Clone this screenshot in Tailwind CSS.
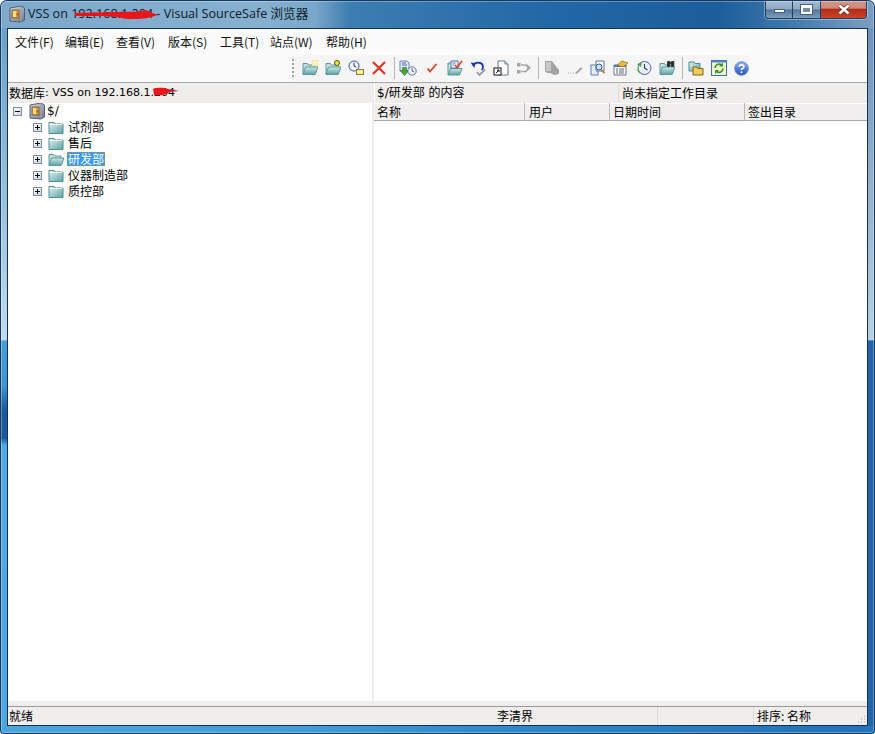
<!DOCTYPE html>
<html lang="zh-CN">
<head>
    <meta charset="UTF-8">
    <title>VSS on 192.168.1.204 - Visual SourceSafe 浏览器</title>
    <script src="https://cdn.jsdelivr.net/npm/@tailwindcss/browser@4"></script>
</head>
<body class="bg-white overflow-hidden">
    <svg width="0" height="0" class="block h-0 w-0">
        <defs>
            <linearGradient id="teal" x1="0" y1="0" x2="1" y2="1">
                <stop offset="0" stop-color="#e2f3f1"/>
                <stop offset="1" stop-color="#5fa5a5"/>
            </linearGradient>
            <linearGradient id="tealOpen" x1="0" y1="0" x2="0" y2="1">
                <stop offset="0" stop-color="#cfe9e6"/>
                <stop offset="1" stop-color="#5d9fa3"/>
            </linearGradient>
            <linearGradient id="safe" x1="0" y1="0" x2="1" y2="1">
                <stop offset="0" stop-color="#e0e0ea"/>
                <stop offset="1" stop-color="#6f7488"/>
            </linearGradient>
            <linearGradient id="ball" x1="0" y1="0" x2="0" y2="1">
                <stop offset="0" stop-color="#8fb4ef"/>
                <stop offset="1" stop-color="#1f4fc0"/>
            </linearGradient>
            <symbol id="folder" viewBox="0 0 16 16">
                <path d="M1 3.500h5l1 1.500h8v9.500H1z" fill="url(#teal)" stroke="#4d8d8f"/>
                <path d="M1.500 5.500h13" stroke="#f2fbfa"/>
            </symbol>
            <symbol id="folderOpen" viewBox="0 0 16 16">
                <path d="M1 14V3.500h4.500l1 1.500H13V7" fill="#bfe0dd" stroke="#5c9a9c"/>
                <path d="M1 14.500l2.500-7.500H16l-2.800 7.500z" fill="url(#tealOpen)" stroke="#5c9a9c"/>
            </symbol>
            <symbol id="safeIcon" viewBox="0 0 18 18">
                <path d="M2 3l11-2 3.500 2v12l-3.500 2-11-1z" fill="url(#safe)" stroke="#565b70"/>
                <path d="M13 1.500v15" stroke="#9a9fb2"/>
                <rect x="4" y="5" width="7" height="8" fill="#d99f2b" stroke="#77683f"/>
                <rect x="5" y="6" width="3" height="6" fill="#f7dc83"/>
                <circle cx="9.500" cy="9.500" r="1" fill="#c8343a"/>
            </symbol>
            <symbol id="clockSmall" viewBox="0 0 12 12">
                <circle cx="6" cy="6" r="5" fill="#f4f6ff" stroke="#3c55a5"/>
                <path d="M6 2.800V6l2.400 1.200" fill="none" stroke="#27306f"/>
            </symbol>
        </defs>
    </svg>

    <div class="w-[875px] h-[734px] flex flex-col px-[7px] pb-[8px] bg-[#2272b9] [font-family:'Noto_Sans_CJK_SC',sans-serif] text-[12px] text-black relative overflow-hidden rounded-t-[7px] rounded-b-[4px]">
        <!-- Aero frame tint -->
        <div class="absolute left-0 right-0 top-0 h-[28px] bg-[linear-gradient(90deg,#7fa9cb_0%,#86b0d0_30%,#7aa6c9_36%,#3d7db1_40%,#2268a6_63%,#1c5d9b_82%,#3f78ab_90%,#7d9fc2_100%)]"></div>
        <div class="absolute left-0 top-[28px] bottom-0 w-[7px] bg-[linear-gradient(180deg,#6aa0c8_0%,#c0dcec_44.200%,#4a9fd8_44.300%,#3f95d0_50.600%,#1a5a9c_54.100%,#1a5a9c_58.100%,#52abe0_59.100%,#4fa6dd_100%)]"></div>
        <div class="absolute right-0 top-[28px] bottom-0 w-[7px] bg-[linear-gradient(180deg,#6f93b8_0%,#b8cfe2_44.200%,#2364a8_44.300%,#2364a8_100%)]"></div>
        <div class="absolute left-0 right-0 bottom-0 h-[8px] bg-[linear-gradient(90deg,#4aa5dc_0%,#45a0d9_30%,#2d87c9_60%,#2272b9_100%)]"></div>

        <!-- Title bar -->
        <div class="h-[28px] flex items-center relative shrink-0 -mx-[7px] pl-[8px]">
            <svg class="w-[18px] h-[18px] shrink-0"><use href="#safeIcon"/></svg>
            <span class="ml-[2px] text-[12.600px] text-[#0c1a28] [font-family:'Open_Sans','Noto_Sans_CJK_SC',sans-serif] relative whitespace-nowrap">VSS on 192.168.1.204 - Visual SourceSafe 浏览器
                <svg class="absolute left-[46px] top-[2px] w-[86px] h-[14px]" viewBox="0 0 86 14"><path d="M1 6L40 5C50 4 60 6 72 3 74 4 80 7 85 8 78 9 76 12 60 12 50 13 46 9 30 9L1 9z" fill="#e8151a"/></svg>
            </span>
            <!-- Caption buttons -->
            <div class="absolute right-[8px] top-0 flex h-[19px] w-[102px] rounded-b-[4px] border border-t-0 border-[#20415f] overflow-hidden shadow-[0_0_0_1px_rgba(255,255,255,0.35)]">
                <div class="w-[27px] flex items-end justify-center pb-[5px] border-r border-[#20415f] bg-[linear-gradient(180deg,#a9bfd4_0%,#8ea9c4_50%,#54779c_55%,#7f9cbb_100%)]">
                    <div class="w-[11px] h-[4px] bg-white border border-[#4a6076]"></div>
                </div>
                <div class="w-[28px] flex items-center justify-center border-r border-[#20415f] bg-[linear-gradient(180deg,#a9bfd4_0%,#8ea9c4_50%,#54779c_55%,#7f9cbb_100%)]">
                    <div class="w-[11px] h-[9px] border-2 border-t-[3px] border-white bg-[#6f8cab] outline outline-[#4a6076]"></div>
                </div>
                <div class="flex-1 flex items-center justify-center bg-[linear-gradient(180deg,#d09a8c_0%,#cf8878_45%,#b52c16_52%,#c8442c_100%)]">
                    <svg width="12" height="11" viewBox="0 0 12 11"><path d="M1.500 1.500l9 8M10.500 1.500l-9 8" stroke="#4f2b24" stroke-width="4"/><path d="M1.500 1.500l9 8M10.500 1.500l-9 8" stroke="#fff" stroke-width="2.600"/></svg>
                </div>
            </div>
        </div>

        <!-- Client area -->
        <div class="flex-1 flex flex-col min-h-0 relative border border-[#12304f] bg-[#f0eded]">
            <!-- Menu bar -->
            <div class="h-[25px] bg-[#fbfbfb] flex items-center pl-[7px] shrink-0 text-[#111] text-[12px]">
                <span class="w-[50px]">文件(F)</span>
                <span class="w-[51px]">编辑(E)</span>
                <span class="w-[52px]">查看(V)</span>
                <span class="w-[52px]">版本(S)</span>
                <span class="w-[50px]">工具(T)</span>
                <span class="w-[56px]">站点(W)</span>
                <span>帮助(H)</span>
            </div>

            <!-- Toolbar -->
            <div class="h-[29px] bg-[#fbfbfb] flex items-center justify-end pr-[118px] shrink-0 border-b border-[#a9a9a9]">
                <div class="flex items-center h-[26px] bg-[#f5f5f5]">
                    <div class="w-[2px] h-[18px] mr-[8px] [background-image:linear-gradient(#a0a0a0_50%,transparent_50%)] [background-size:2px_4px]"></div>
                    <div class="flex items-center gap-[7px]">
                        <!-- new folder / add files -->
                        <svg class="w-[16px] h-[16px]" viewBox="0 0 16 16"><use href="#folderOpen"/><path d="M10 0h6v6h-6z" fill="#f3e37f"/><path d="M10 2h6M10 4h6M12 0v6M14 0v6" stroke="#fff" stroke-width=".6"/></svg>
                        <svg class="w-[16px] h-[16px]" viewBox="0 0 16 16"><use href="#folderOpen"/><path d="M12 0v6M9 3h6" stroke="#5f5a10" stroke-width="3"/><path d="M12 .800v4.400M9.800 3h4.400" stroke="#f5ee3c" stroke-width="1.600"/></svg>
                        <svg class="w-[16px] h-[16px]" viewBox="0 0 16 16"><svg x="0" y="0" width="12" height="12"><use href="#clockSmall"/></svg><rect x="8.500" y="9.500" width="7" height="5" fill="#fbf09b" stroke="#8a7c2a"/></svg>
                        <svg class="w-[16px] h-[16px]" viewBox="0 0 16 16"><path d="M2 2l12 12M14 2L2 14" stroke="#e4351c" stroke-width="2.200"/></svg>
                    </div>
                    <div class="w-px h-[22px] bg-[#b5b5b5] ml-[7px] mr-[4px]"></div>
                    <div class="flex items-center gap-[7px]">
                        <!-- get latest -->
                        <svg class="w-[18px] h-[16px]" viewBox="0 0 18 16"><path d="M1 1h7l2 2v8H1z" fill="#e4ecfb" stroke="#6d83b9"/><path d="M3 3h4M3 5h5" stroke="#4a66b0"/><path d="M3.500 7.500h4v3h2.500l-4.500 5-4.500-5h2.500z" fill="#48a637" stroke="#2c7a28" stroke-width=".6"/><svg x="8" y="6" width="10" height="10"><use href="#clockSmall"/></svg></svg>
                        <!-- check out -->
                        <svg class="w-[16px] h-[16px]" viewBox="0 0 16 16"><path d="M3.500 8.500l2.500 3 6.500-7.500" fill="none" stroke="#d9492f" stroke-width="1.900"/></svg>
                        <!-- check in -->
                        <svg class="w-[16px] h-[16px]" viewBox="0 0 16 16"><path d="M1 15V3h4l1 1.500h6V7" fill="#bfe0dd" stroke="#5c9a9c"/><path d="M1 15l2.500-6.500H15L12.500 15z" fill="url(#tealOpen)" stroke="#5c9a9c"/><path d="M4 1h7v7H4z" fill="#fff" stroke="#4d68aa"/><path d="M5.500 3h3M5.500 5h2" stroke="#4d68aa"/><path d="M8 5l2 2.500L15 1" fill="none" stroke="#df4326" stroke-width="1.600"/></svg>
                        <!-- undo check out -->
                        <svg class="w-[16px] h-[16px]" viewBox="0 0 16 16"><path d="M3 6c2-5 10-4 10 1 0 1.500-.5 2.500-1.500 3" fill="none" stroke="#1a3aa8" stroke-width="1.800"/><path d="M.500 2.500l5 .5-1 5z" fill="#1a3aa8"/><path d="M7 12l2.500 3L15 9.500" fill="none" stroke="#9a9a9a" stroke-width="1.800"/></svg>
                        <!-- share -->
                        <svg class="w-[16px] h-[16px]" viewBox="0 0 16 16"><path d="M5 1h7l3 3v11H5z" fill="#fff" stroke="#69778c"/><path d="M12 1v3h3" fill="#dfe6f2" stroke="#69778c"/><rect x="1" y="8" width="7" height="7" fill="#fff" stroke="#111"/><path d="M3 13l3-3M4 10h2v2" fill="none" stroke="#111"/></svg>
                        <!-- branch (disabled) -->
                        <svg class="w-[16px] h-[16px]" viewBox="0 0 16 16"><rect x="1" y="3" width="3.500" height="3.500" fill="#a8a8a8"/><rect x="1" y="10" width="3.500" height="3.500" fill="#a8a8a8"/><path d="M5 5h5l2 2.500M5 11.500h5l2-2.500" fill="none" stroke="#a8a8a8" stroke-width="1.400"/><path d="M11 4l4 4-4 3z" fill="#a8a8a8"/></svg>
                    </div>
                    <div class="w-px h-[22px] bg-[#b5b5b5] ml-[6px] mr-[5px]"></div>
                    <div class="flex items-center gap-[7px]">
                        <!-- label, disabled -->
                        <svg class="w-[16px] h-[16px]" viewBox="0 0 16 16"><path d="M1 1h7l3 4 4 5v4l-5 1-4-2H3L1 11z" fill="#a3a3a3"/><path d="M2 2h5v9H2z" fill="#c9c9c9"/></svg>
                        <!-- pencil, disabled -->
                        <svg class="w-[16px] h-[16px]" viewBox="0 0 16 16"><path d="M1 13h1M3.500 13h1M6 13h1" stroke="#a8a8a8"/><path d="M8 13l6-6 1.500 1.500L10 14z" fill="#a8a8a8"/></svg>
                        <!-- diff -->
                        <svg class="w-[16px] h-[16px]" viewBox="0 0 16 16"><path d="M1 5h7v10H1z" fill="#e7edfa" stroke="#5f78ad"/><path d="M6 1h8v10H6z" fill="#fff" stroke="#5f78ad"/><circle cx="9" cy="7" r="3" fill="#cfe6fb" stroke="#2e5da8"/><path d="M11 9.500l3.500 3.500" stroke="#b38a3a" stroke-width="2"/></svg>
                        <!-- show properties -->
                        <svg class="w-[16px] h-[16px]" viewBox="0 0 16 16"><path d="M1 5h12v10H1z" fill="#fff" stroke="#69778c"/><path d="M1 5h12v2H1z" fill="#4f79bd"/><path d="M3 9h2M6 9h5M3 11h2M6 11h5M3 13h2M6 13h5" stroke="#5f6b80"/><path d="M4 5l5-4 6 2-5 4z" fill="#eebd3a" stroke="#8a6a18" stroke-width=".7"/></svg>
                        <!-- history -->
                        <svg class="w-[16px] h-[16px]" viewBox="0 0 16 16"><circle cx="8.500" cy="8" r="6.500" fill="#eef1fb" stroke="#4963b5"/><path d="M8.500 4v4l3 2" fill="none" stroke="#2d3a7c" stroke-width="1.200"/><path d="M1 4l5-2-1 5z" fill="#4aa63a"/><path d="M2 9a6 6 0 0 0 2 4" fill="none" stroke="#4aa63a" stroke-width="1.600"/></svg>
                        <!-- find -->
                        <svg class="w-[16px] h-[16px]" viewBox="0 0 16 16"><use href="#folderOpen"/><rect x="8" y="1" width="3.300" height="6" rx="1" fill="#333"/><rect x="12" y="1" width="3.300" height="6" rx="1" fill="#333"/><path d="M11 3h1.200" stroke="#333" stroke-width="2"/></svg>
                    </div>
                    <div class="w-px h-[22px] bg-[#b5b5b5] ml-[7px] mr-[5px]"></div>
                    <div class="flex items-center gap-[7px]">
                        <!-- set working folder -->
                        <svg class="w-[16px] h-[16px]" viewBox="0 0 16 16"><path d="M1 2h5l1 1.500h5V11H1z" fill="url(#teal)" stroke="#4d8d8f"/><path d="M5 7h4l1 1.500h5V15H5z" fill="#f2cb58" stroke="#7b6720"/></svg>
                        <!-- refresh -->
                        <svg class="w-[16px] h-[16px]" viewBox="0 0 16 16"><rect x=".500" y=".500" width="15" height="15" fill="#f6f3cf" stroke="#3f6fb0"/><path d="M.500.500h15v2h-15z" fill="#4f84c7"/><path d="M4 8a4 4 0 0 1 6.500-3" fill="none" stroke="#2f9a2b" stroke-width="1.700"/><path d="M12 2.500v4H8z" fill="#2f9a2b"/><path d="M12 8.500a4 4 0 0 1-6.500 3" fill="none" stroke="#2f9a2b" stroke-width="1.700"/><path d="M4 14v-4h4z" fill="#2f9a2b"/></svg>
                        <!-- help -->
                        <svg class="w-[15px] h-[15px]" viewBox="0 0 16 16"><circle cx="8" cy="8" r="7.300" fill="url(#ball)" stroke="#6d87c8"/><path d="M5.500 6.200C5.700 3.500 10.500 3.500 10.500 6c0 2-2.500 2-2.500 3.700" fill="none" stroke="#fff" stroke-width="1.800"/><circle cx="8" cy="12" r="1.100" fill="#fff"/></svg>
                    </div>
                </div>
            </div>

            <!-- Panes -->
            <div class="flex-1 flex min-h-0">
                <!-- Project tree -->
                <div class="w-[364px] shrink-0 flex flex-col">
                    <div class="h-[20px] flex items-center pl-[1px] bg-[#f0eded] relative whitespace-nowrap">
                        <span>数据库</span>
                        <span class="relative text-[11px] [font-family:'DejaVu_Sans',sans-serif]">: VSS on 192.168.1.204
                            <svg class="absolute right-[-6px] top-[1px] w-[30px] h-[12px]" viewBox="0 0 30 12"><path d="M2 3c6-2 12-1 15 0l11 2-10 1c-2 3-10 4-15 3z" fill="#e8151a"/></svg>
                        </span>
                    </div>
                    <div class="flex-1 bg-white text-[12px]">
                        <div class="h-[16px] flex items-center pl-[5px]">
                            <div class="w-[9px] h-[9px] border border-[#7d8aa8] bg-[linear-gradient(135deg,#fff,#ccd3e2)] flex items-center justify-center"><div class="w-[5px] h-px bg-black"></div></div>
                            <svg class="w-[18px] h-[18px] ml-[6px] shrink-0"><use href="#safeIcon"/></svg>
                            <span class="ml-[1px] [font-family:'DejaVu_Sans',sans-serif]">$/</span>
                        </div>
                        <div class="h-[16px] flex items-center pl-[25px]">
                            <div class="w-[9px] h-[9px] border border-[#7d8aa8] bg-[linear-gradient(135deg,#fff,#ccd3e2)] flex items-center justify-center relative"><div class="w-[5px] h-px bg-black"></div><div class="absolute w-px h-[5px] bg-black"></div></div>
                            <svg class="w-[16px] h-[16px] ml-[6px] shrink-0"><use href="#folder"/></svg>
                            <span class="ml-[4px]">试剂部</span>
                        </div>
                        <div class="h-[16px] flex items-center pl-[25px]">
                            <div class="w-[9px] h-[9px] border border-[#7d8aa8] bg-[linear-gradient(135deg,#fff,#ccd3e2)] flex items-center justify-center relative"><div class="w-[5px] h-px bg-black"></div><div class="absolute w-px h-[5px] bg-black"></div></div>
                            <svg class="w-[16px] h-[16px] ml-[6px] shrink-0"><use href="#folder"/></svg>
                            <span class="ml-[4px]">售后</span>
                        </div>
                        <div class="h-[16px] flex items-center pl-[25px]">
                            <div class="w-[9px] h-[9px] border border-[#7d8aa8] bg-[linear-gradient(135deg,#fff,#ccd3e2)] flex items-center justify-center relative"><div class="w-[5px] h-px bg-black"></div><div class="absolute w-px h-[5px] bg-black"></div></div>
                            <svg class="w-[16px] h-[16px] ml-[6px] shrink-0"><use href="#folderOpen"/></svg>
                            <span class="ml-[3px] h-[14px] leading-[12px] bg-[#3399ff] text-white border border-dotted border-[#d08a30]">研发部</span>
                        </div>
                        <div class="h-[16px] flex items-center pl-[25px]">
                            <div class="w-[9px] h-[9px] border border-[#7d8aa8] bg-[linear-gradient(135deg,#fff,#ccd3e2)] flex items-center justify-center relative"><div class="w-[5px] h-px bg-black"></div><div class="absolute w-px h-[5px] bg-black"></div></div>
                            <svg class="w-[16px] h-[16px] ml-[6px] shrink-0"><use href="#folder"/></svg>
                            <span class="ml-[4px]">仪器制造部</span>
                        </div>
                        <div class="h-[16px] flex items-center pl-[25px]">
                            <div class="w-[9px] h-[9px] border border-[#7d8aa8] bg-[linear-gradient(135deg,#fff,#ccd3e2)] flex items-center justify-center relative"><div class="w-[5px] h-px bg-black"></div><div class="absolute w-px h-[5px] bg-black"></div></div>
                            <svg class="w-[16px] h-[16px] ml-[6px] shrink-0"><use href="#folder"/></svg>
                            <span class="ml-[4px]">质控部</span>
                        </div>
                    </div>
                </div>

                <!-- Splitter -->
                <div class="w-[2px] shrink-0 bg-[#f0eded]"></div>

                <!-- File list -->
                <div class="flex-1 flex flex-col min-w-0">
                    <div class="h-[20px] flex items-center bg-[#f0eded] border-l border-[#fff]">
                        <span class="w-[244px] pl-[2px] border-r border-[#dcdcdc] [font-family:'DejaVu_Sans','Noto_Sans_CJK_SC',sans-serif]">$/研发部 的内容</span>
                        <span class="pl-[3px]">尚未指定工作目录</span>
                    </div>
                    <div class="h-[18px] flex items-center pb-[1px] bg-[#f0eeee] border-t border-white border-b border-b-[#a9a9a9]">
                        <span class="w-[151px] pl-[3px] border-r border-[#b8b8b8]">名称</span>
                        <span class="w-[85px] pl-[4px] border-r border-[#b8b8b8]">用户</span>
                        <span class="w-[135px] pl-[3px] border-r border-[#b8b8b8]">日期时间</span>
                        <span class="pl-[3px]">签出目录</span>
                    </div>
                    <div class="flex-1 bg-white"></div>
                </div>
            </div>

            <!-- Status bar -->
            <div class="h-[24px] shrink-0 flex flex-col">
                <div class="h-[5px] bg-[#f0eded]"></div>
                <div class="flex-1 flex items-center bg-[#f0eded] border-t border-[#9a9a9a] text-[12px] relative">
                    <span class="w-[489px] pl-[1px]">就绪</span>
                    <span class="w-[160px]">李清界</span>
                    <span class="w-[96px] h-full border-l border-[#dcdcdc]"></span>
                    <span class="pl-[3px] h-full flex items-center border-l border-[#dcdcdc]">排序: 名称</span>
                    <svg class="absolute right-[1px] bottom-[1px] w-[10px] h-[10px]" viewBox="0 0 10 10"><path d="M8 2h1M5 5h1M8 5h1M2 8h1M5 8h1M8 8h1" stroke="#a8a8a8"/></svg>
                </div>
            </div>
        </div>

        <!-- Glass edge lines -->
        <div class="absolute inset-0 border border-[#153a60] rounded-t-[7px] rounded-b-[4px] pointer-events-none"></div>
        <div class="absolute inset-[1px] border border-white/30 rounded-t-[6px] rounded-b-[3px] pointer-events-none"></div>
    </div>
</body>
</html>
